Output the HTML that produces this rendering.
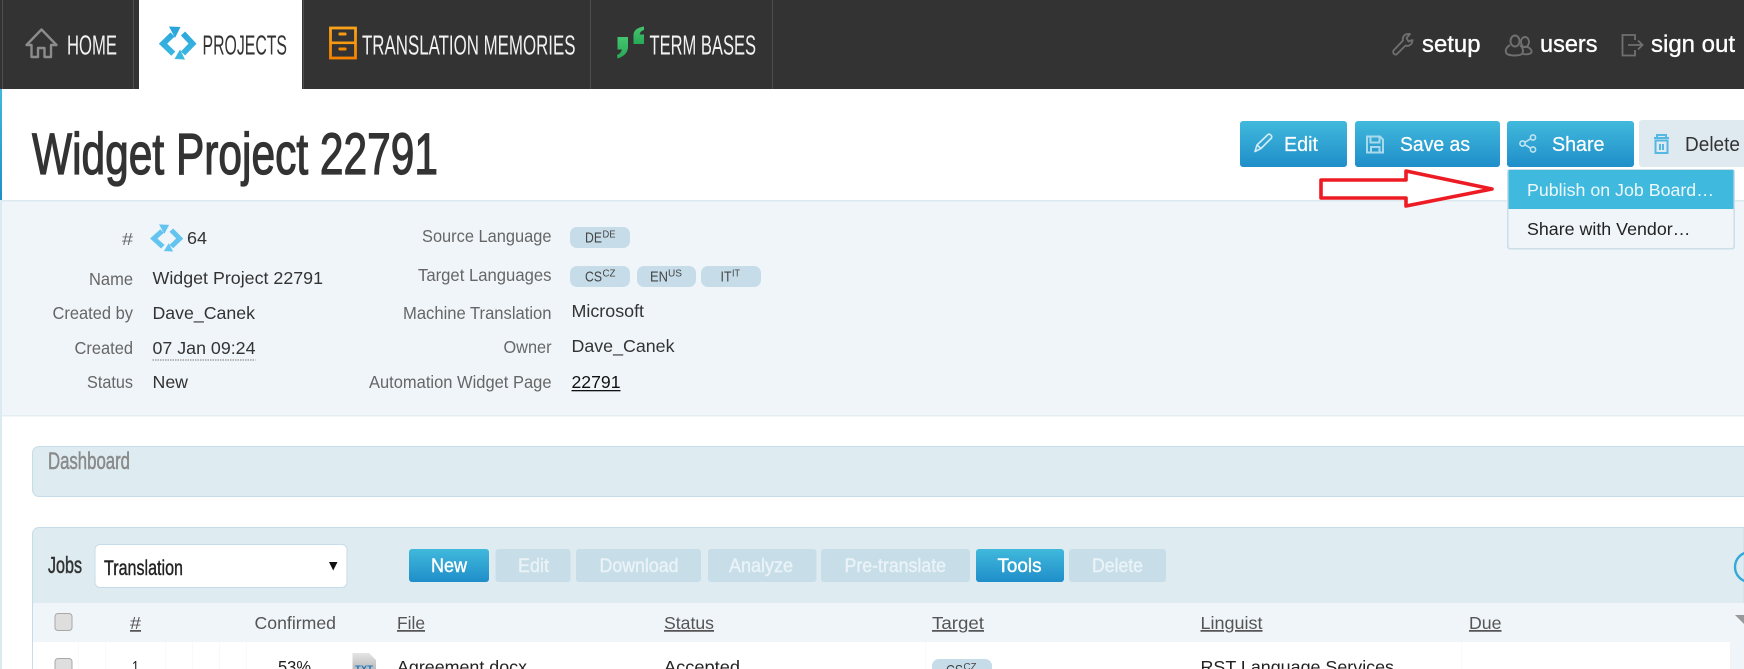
<!DOCTYPE html>
<html>
<head>
<meta charset="utf-8">
<title>Widget Project 22791</title>
<style>
html,body{margin:0;padding:0;background:#fff;width:1744px;height:669px;overflow:hidden}
svg{display:block}
text{font-family:"Liberation Sans",Arial,sans-serif}
.nav{font-size:28px;fill:#f2f2f2}
.lab{font-size:17.5px;fill:#666}
.val{font-size:17.5px;fill:#333}
.top{font-size:24px;fill:#fff;stroke:#fff;stroke-width:.35px}
.btn{font-size:20px;fill:#fff;stroke:#fff;stroke-width:.2px}
.tb{font-size:19.5px;fill:#fff;stroke:#fff;stroke-width:.4px}
.dis{font-size:19.5px;fill:#eaf3f7;stroke:#eaf3f7;stroke-width:.4px}
.th{font-size:17.5px;fill:#555;text-decoration:underline}
.td{font-size:17.5px;fill:#222}
.pill{font-size:14.5px;fill:#444}
.sup{font-size:10px;fill:#444}
</style>
</head>
<body>
<svg width="1744" height="669" viewBox="0 0 1744 669" xmlns="http://www.w3.org/2000/svg">
<defs>
<linearGradient id="g" x1="0" y1="0" x2="0" y2="1"><stop offset="0" stop-color="#41b9dc"/><stop offset="1" stop-color="#1f8ec9"/></linearGradient>
<linearGradient id="p" gradientUnits="userSpaceOnUse" x1="0" y1="26" x2="0" y2="60"><stop offset="0" stop-color="#29a3dc"/><stop offset="1" stop-color="#3cbbe0"/></linearGradient>
<linearGradient id="o" x1="0" y1="0" x2="0" y2="1"><stop offset="0" stop-color="#f9a21a"/><stop offset="1" stop-color="#f58200"/></linearGradient>
<linearGradient id="q" x1="0" y1="0" x2="0" y2="1"><stop offset="0" stop-color="#46c56f"/><stop offset="1" stop-color="#27a956"/></linearGradient>
<linearGradient id="f" x1="0" y1="0" x2="0" y2="1"><stop offset="0" stop-color="#e4e4e4"/><stop offset="1" stop-color="#bcbcbc"/></linearGradient>
</defs>

<!-- page base -->
<rect width="1744" height="669" fill="#fff"/>
<rect x="0" y="89" width="2" height="111" fill="url(#g)"/>
<rect x="0" y="200" width="2" height="469" fill="#dbe9f0"/>

<!-- header -->
<rect width="1744" height="89" fill="#333"/>
<rect x="2" y="0" width="1" height="89" fill="#4e4e4e"/>
<rect x="133" y="0" width="1" height="89" fill="#4e4e4e"/>
<rect x="139" y="0" width="163" height="89" fill="#fff"/>
<rect x="303" y="0" width="1" height="89" fill="#4e4e4e"/>
<rect x="590" y="0" width="1" height="89" fill="#4e4e4e"/>
<rect x="772" y="0" width="1" height="89" fill="#4e4e4e"/>

<path d="M26.5 45 L41.5 29.5 L56.5 45 H51 V57 H44.5 V48 H38 V57 H31.5 V45 Z" fill="none" stroke="#8c8c8c" stroke-width="2.4" stroke-linejoin="round"/>
<text class="nav" x="67" y="54.5" textLength="50" lengthAdjust="spacingAndGlyphs">HOME</text>

<g>
<path d="M173.3 53.7 L163 43.7 L172.5 34.5" fill="none" stroke="url(#p)" stroke-width="5.8"/>
<path d="M169 26.5 L180.5 27 L175 38 Z" fill="url(#p)"/>
<path d="M183 33.5 L192.5 43.7 L183 53.5" fill="none" stroke="url(#p)" stroke-width="5.8"/>
<path d="M185 59.5 L174.5 59 L180 49.5 Z" fill="url(#p)"/>
</g>
<text class="nav" style="fill:#333" x="202.5" y="54.5" textLength="84.5" lengthAdjust="spacingAndGlyphs">PROJECTS</text>

<rect x="330.5" y="28" width="25" height="30" fill="none" stroke="url(#o)" stroke-width="2.8"/>
<rect x="330" y="41.5" width="26" height="2.6" fill="#f79a10"/>
<rect x="338.5" y="32.5" width="8" height="3" rx="1" fill="#f79a10"/>
<rect x="338.5" y="47.5" width="8" height="3" rx="1" fill="#f58a00"/>
<text class="nav" x="362" y="54.5" textLength="213.5" lengthAdjust="spacingAndGlyphs">TRANSLATION MEMORIES</text>

<path d="M617.5 37 H628 V47 C628 53 623 57 617.5 58.5 L617 55 C619.5 54 621.5 52 621.8 49.5 H617.5 Z" fill="url(#q)"/>
<path d="M644 44 H633.5 V35 C633.5 30 638 27.5 644 26.5 L644 30 C641.5 30.8 640 32.2 639.7 34.5 H644 Z" fill="url(#q)"/>
<text class="nav" x="649.5" y="54.5" textLength="106.5" lengthAdjust="spacingAndGlyphs">TERM BASES</text>

<!-- header right -->
<path d="M1393.5 50.5 L1403 40.5 C1402 36.5 1405 33.5 1410 34 L1406.5 38 L1408.5 41.5 L1412.5 40 C1412.5 44 1409 47 1405.5 45.5 L1396.5 54.5 C1394 55 1392.5 53 1393.5 50.5 Z" fill="none" stroke="#707070" stroke-width="1.8" stroke-linejoin="round"/>
<text class="top" x="1422" y="52" textLength="58.5" lengthAdjust="spacingAndGlyphs">setup</text>

<g fill="none" stroke="#707070" stroke-width="1.9">
<ellipse cx="1515" cy="41" rx="4.5" ry="5.5"/>
<ellipse cx="1525" cy="42" rx="4" ry="5"/>
<path d="M1510 45 C1505 48 1505 52 1507 54 C1511 56 1519 56 1522 54 C1524 51 1523 48 1520 45"/>
<path d="M1523 47 C1530 46 1533 51 1531 53 C1529 54.5 1526 54.5 1523 54"/>
</g>
<text class="top" x="1540" y="52" textLength="57.5" lengthAdjust="spacingAndGlyphs">users</text>

<path d="M1635 40 V35 H1622.5 V55.5 H1635 V50" fill="none" stroke="#707070" stroke-width="1.8"/>
<path d="M1628 45 H1642 M1638 40.5 L1642.5 45 L1638 49.5" fill="none" stroke="#707070" stroke-width="1.8"/>
<text class="top" x="1651" y="52" textLength="84" lengthAdjust="spacingAndGlyphs">sign out</text>

<!-- title -->
<text x="32" y="174" font-size="58" fill="#333" stroke="#333" stroke-width="1.3" textLength="406" lengthAdjust="spacingAndGlyphs">Widget Project 22791</text>

<!-- info panel -->
<rect x="2" y="200" width="1742" height="216" fill="#f0f5f9"/>
<rect x="2" y="200" width="1742" height="1.5" fill="#dbe9f0"/>
<rect x="2" y="415" width="1742" height="1.5" fill="#e3eef3"/>

<text class="lab" x="122" y="245" textLength="11" lengthAdjust="spacingAndGlyphs">#</text>
<g transform="translate(10.3,202.7) scale(.88,.82)">
<path d="M173.3 53.7 L163 43.7 L172.5 34.5" fill="none" stroke="#63c4f0" stroke-width="5.8"/>
<path d="M169 26.5 L180.5 27 L175 38 Z" fill="#63c4f0"/>
<path d="M183 33.5 L192.5 43.7 L183 53.5" fill="none" stroke="#63c4f0" stroke-width="5.8"/>
<path d="M185 59.5 L174.5 59 L180 49.5 Z" fill="#63c4f0"/>
</g>
<text class="val" x="187" y="244" textLength="20" lengthAdjust="spacingAndGlyphs">64</text>

<text class="lab" x="89" y="285" textLength="44" lengthAdjust="spacingAndGlyphs">Name</text>
<text class="val" x="152.5" y="284" textLength="170.5" lengthAdjust="spacingAndGlyphs">Widget Project 22791</text>
<text class="lab" x="52.5" y="319" textLength="80.5" lengthAdjust="spacingAndGlyphs">Created by</text>
<text class="val" x="152.5" y="319" textLength="102.5" lengthAdjust="spacingAndGlyphs">Dave_Canek</text>
<text class="lab" x="74.5" y="354" textLength="58.5" lengthAdjust="spacingAndGlyphs">Created</text>
<text class="val" x="152.5" y="354" textLength="103" lengthAdjust="spacingAndGlyphs">07 Jan 09:24</text>
<line x1="152.5" y1="360" x2="255.5" y2="360" stroke="#777" stroke-width="1" stroke-dasharray="1.5 1"/>
<text class="lab" x="87" y="388" textLength="46" lengthAdjust="spacingAndGlyphs">Status</text>
<text class="val" x="152.5" y="388" textLength="35.5" lengthAdjust="spacingAndGlyphs">New</text>

<text class="lab" x="422" y="242" textLength="129.5" lengthAdjust="spacingAndGlyphs">Source Language</text>
<text class="lab" x="418" y="281" textLength="133.5" lengthAdjust="spacingAndGlyphs">Target Languages</text>
<text class="lab" x="403" y="319" textLength="148.5" lengthAdjust="spacingAndGlyphs">Machine Translation</text>
<text class="lab" x="503.5" y="353" textLength="48" lengthAdjust="spacingAndGlyphs">Owner</text>
<text class="lab" x="369" y="388" textLength="182.5" lengthAdjust="spacingAndGlyphs">Automation Widget Page</text>

<rect x="570" y="227" width="60" height="21" rx="7" fill="#c6dde9"/>
<text class="pill" x="585" y="242.5" textLength="17" lengthAdjust="spacingAndGlyphs">DE</text>
<text class="sup" x="602.5" y="237.5" textLength="13" lengthAdjust="spacingAndGlyphs">DE</text>
<rect x="570" y="266" width="60" height="21" rx="7" fill="#c6dde9"/>
<text class="pill" x="585" y="281.5" textLength="17" lengthAdjust="spacingAndGlyphs">CS</text>
<text class="sup" x="602.5" y="276.5" textLength="13" lengthAdjust="spacingAndGlyphs">CZ</text>
<rect x="637" y="266" width="59" height="21" rx="7" fill="#c6dde9"/>
<text class="pill" x="650" y="281.5" textLength="18" lengthAdjust="spacingAndGlyphs">EN</text>
<text class="sup" x="668" y="276.5" textLength="14" lengthAdjust="spacingAndGlyphs">US</text>
<rect x="701" y="266" width="60" height="21" rx="7" fill="#c6dde9"/>
<text class="pill" x="720.5" y="281.5" textLength="11" lengthAdjust="spacingAndGlyphs">IT</text>
<text class="sup" x="732" y="276.5" textLength="8" lengthAdjust="spacingAndGlyphs">IT</text>

<text class="val" x="571.5" y="317" textLength="72.5" lengthAdjust="spacingAndGlyphs">Microsoft</text>
<text class="val" x="571.5" y="352" textLength="103" lengthAdjust="spacingAndGlyphs">Dave_Canek</text>
<text class="val" style="fill:#111" x="571.5" y="388" textLength="49" lengthAdjust="spacingAndGlyphs">22791</text>
<rect x="571.5" y="390" width="49" height="1.3" fill="#111"/>

<!-- action buttons -->
<rect x="1240" y="121" width="107" height="46" rx="3" fill="url(#g)"/>
<rect x="1355" y="121" width="145" height="46" rx="3" fill="url(#g)"/>
<rect x="1507" y="121" width="127" height="46" rx="3" fill="url(#g)"/>
<rect x="1639" y="120" width="110" height="47" rx="3" fill="#dfeaf0"/>

<path d="M1255 151.5 L1257 145 L1268 134.5 C1270 133.5 1272.5 136 1271.5 138 L1261 148.5 Z M1257 145 L1261 148.5" fill="none" stroke="#d3ecf5" stroke-width="1.6" stroke-linejoin="round"/>
<text class="btn" x="1284" y="151" textLength="34" lengthAdjust="spacingAndGlyphs">Edit</text>

<g fill="none" stroke="#a9daeb" stroke-width="2">
<path d="M1367 136.5 H1380 L1383 139.5 V152.5 H1367 Z"/>
<rect x="1370.5" y="136.5" width="9" height="6"/>
<rect x="1371" y="147" width="8.5" height="5.5"/>
</g>
<text class="btn" x="1400" y="151" textLength="70" lengthAdjust="spacingAndGlyphs">Save as</text>

<g fill="none" stroke="#bfe3f0" stroke-width="1.6">
<circle cx="1522.5" cy="143.5" r="2.6"/>
<circle cx="1533" cy="137.5" r="2.6"/>
<circle cx="1533" cy="149.5" r="2.6"/>
<path d="M1524.7 142.3 L1530.7 138.8 M1524.7 144.7 L1530.7 148.2"/>
</g>
<text class="btn" x="1552" y="151" textLength="52.5" lengthAdjust="spacingAndGlyphs">Share</text>

<g fill="none" stroke="#55b8e2" stroke-width="2">
<path d="M1654 138 H1669 M1657 138 V135 H1666 V138"/>
<path d="M1655.5 140.5 H1667.5 V153 H1655.5 Z" />
<path d="M1660 144 V150 M1663 144 V150"/>
</g>
<text class="btn" style="fill:#333;stroke:none" x="1685" y="151" textLength="55" lengthAdjust="spacingAndGlyphs">Delete</text>

<!-- dropdown -->
<rect x="1507" y="169" width="228" height="80.5" rx="3" fill="#ccdee7"/>
<rect x="1508.5" y="170" width="225" height="78" rx="2" fill="#f0f5f9"/>
<rect x="1508.5" y="170" width="225" height="39" fill="#3fbade"/>
<text x="1527" y="196" font-size="17.5" fill="#eef8fb" textLength="187" lengthAdjust="spacingAndGlyphs">Publish on Job Board…</text>
<text x="1527" y="235" font-size="17.5" fill="#222" textLength="163.5" lengthAdjust="spacingAndGlyphs">Share with Vendor…</text>

<!-- red arrow -->
<path d="M1321 180 H1406 V171 L1492 189 L1406 206 V198 H1321 Z" fill="#fff" stroke="#ed1c24" stroke-width="3.6" stroke-linejoin="round"/>

<!-- dashboard -->
<path d="M1744 446.5 H39 A6.5 6.5 0 0 0 32.5 453 V490 A6.5 6.5 0 0 0 39 496.5 H1744" fill="#deebf1" stroke="#c6dde9" stroke-width="1"/>
<text x="48" y="469" font-size="24" fill="#8a8a8a" stroke="#8a8a8a" stroke-width=".5" textLength="82" lengthAdjust="spacingAndGlyphs">Dashboard</text>

<!-- jobs panel -->
<path d="M1744 527.5 H39 A6.5 6.5 0 0 0 32.5 534 V669 H1744 Z" fill="#deebf1" stroke="#c6dde9" stroke-width="1"/>
<text x="48" y="573" font-size="23" fill="#333" stroke="#333" stroke-width=".5" textLength="34" lengthAdjust="spacingAndGlyphs">Jobs</text>
<rect x="95" y="544.5" width="252" height="43" rx="5" fill="#fff" stroke="#c6dde9"/>
<text x="104" y="575" font-size="21.5" fill="#222" stroke="#222" stroke-width=".4" textLength="79" lengthAdjust="spacingAndGlyphs">Translation</text>
<path d="M329 562 H337.5 L333.2 570.5 Z" fill="#111"/>

<rect x="409" y="549" width="80" height="33" rx="3" fill="url(#g)"/>
<rect x="495.5" y="549" width="75" height="33" rx="3" fill="#c7dee9"/>
<rect x="576" y="549" width="125" height="33" rx="3" fill="#c7dee9"/>
<rect x="708" y="549" width="108.5" height="33" rx="3" fill="#c7dee9"/>
<rect x="821" y="549" width="149" height="33" rx="3" fill="#c7dee9"/>
<rect x="976" y="549" width="88" height="33" rx="3" fill="url(#g)"/>
<rect x="1069" y="549" width="97" height="33" rx="3" fill="#c7dee9"/>
<text class="tb" x="431" y="572" textLength="36" lengthAdjust="spacingAndGlyphs">New</text>
<text class="dis" x="518" y="572" textLength="31" lengthAdjust="spacingAndGlyphs">Edit</text>
<text class="dis" x="599.5" y="572" textLength="79" lengthAdjust="spacingAndGlyphs">Download</text>
<text class="dis" x="729" y="572" textLength="64" lengthAdjust="spacingAndGlyphs">Analyze</text>
<text class="dis" x="844.5" y="572" textLength="101.5" lengthAdjust="spacingAndGlyphs">Pre-translate</text>
<text class="tb" x="997.5" y="572" textLength="44" lengthAdjust="spacingAndGlyphs">Tools</text>
<text class="dis" x="1092" y="572" textLength="51" lengthAdjust="spacingAndGlyphs">Delete</text>
<circle cx="1750" cy="567" r="15" fill="none" stroke="#34a9d9" stroke-width="2.4"/>

<!-- table header -->
<rect x="33" y="603" width="1711" height="66" fill="#f0f5f9"/>
<rect x="33" y="642" width="1697" height="27" fill="#fff"/>
<g fill="#f7f9fa">
<rect x="78" y="642" width="1" height="27"/><rect x="105" y="642" width="1" height="27"/>
<rect x="165" y="642" width="1" height="27"/><rect x="192" y="642" width="1" height="27"/>
<rect x="219" y="642" width="1" height="27"/><rect x="246" y="642" width="1" height="27"/>
<rect x="925" y="642" width="1" height="27"/><rect x="1461" y="642" width="1" height="27"/>
</g>
<rect x="55" y="613.5" width="17" height="17" rx="3" fill="#dedede" stroke="#a8a8a8"/>
<text class="th" x="130" y="629" textLength="11" lengthAdjust="spacingAndGlyphs">#</text>
<text x="254.5" y="629" font-size="17.5" fill="#555" textLength="81.5" lengthAdjust="spacingAndGlyphs">Confirmed</text>
<text class="th" x="397" y="629" textLength="28" lengthAdjust="spacingAndGlyphs">File</text>
<text class="th" x="664" y="629" textLength="50" lengthAdjust="spacingAndGlyphs">Status</text>
<text class="th" x="932" y="629" textLength="52" lengthAdjust="spacingAndGlyphs">Target</text>
<text class="th" x="1200.5" y="629" textLength="62" lengthAdjust="spacingAndGlyphs">Linguist</text>
<text class="th" x="1469" y="629" textLength="32.5" lengthAdjust="spacingAndGlyphs">Due</text>
<path d="M1735 615 H1744 V624 Z" fill="#999"/>

<!-- first row -->
<rect x="55" y="658.5" width="17" height="17" rx="3" fill="#dedede" stroke="#a8a8a8"/>
<text class="td" x="132" y="673" textLength="7" lengthAdjust="spacingAndGlyphs">1</text>
<text class="td" x="278" y="673" textLength="33" lengthAdjust="spacingAndGlyphs">53%</text>
<path d="M352.5 653 H369 L376 660 V669 H352.5 Z" fill="url(#f)"/>
<text x="355" y="672" font-size="9" font-weight="bold" fill="#1c75bc" textLength="18" lengthAdjust="spacingAndGlyphs">TXT</text>
<text class="td" x="397" y="673" textLength="130" lengthAdjust="spacingAndGlyphs">Agreement.docx</text>
<text class="td" x="664" y="673" textLength="76" lengthAdjust="spacingAndGlyphs">Accepted</text>
<rect x="932" y="659" width="60" height="21" rx="7" fill="#c6dde9"/>
<text class="pill" x="946" y="675" textLength="17" lengthAdjust="spacingAndGlyphs">CS</text>
<text class="sup" x="963.5" y="670" textLength="13" lengthAdjust="spacingAndGlyphs">CZ</text>
<text class="td" x="1200.5" y="673" textLength="193.5" lengthAdjust="spacingAndGlyphs">RST Language Services</text>
</svg>
</body>
</html>
